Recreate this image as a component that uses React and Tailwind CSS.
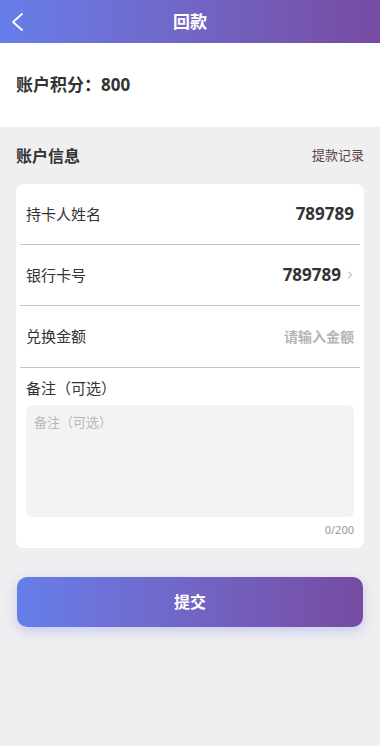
import React, { useState } from "react";
import { ChevronRight } from "lucide-react";

const font = { fontFamily: '"Noto Sans", "Noto Sans CJK SC", sans-serif' };

export default function App() {
  const [amount, setAmount] = useState("");
  const [remark, setRemark] = useState("");

  return (
    <div className="min-h-[746px] bg-[#efeef0] flex flex-col" style={font}>
      {/* 顶部导航 */}
      <div className="h-[43px] flex items-center relative bg-gradient-to-r from-[#667eea] to-[#764ba2]">
        <button className="absolute left-[10px] top-[12px] text-white">
          <svg width="14" height="20" viewBox="0 0 14 20" fill="none" stroke="currentColor" strokeWidth="1.8" strokeLinecap="round" strokeLinejoin="round">
            <polyline points="12,2 3,10 12,18" />
          </svg>
        </button>
        <div className="flex-1 text-center text-white text-[17px] font-bold">回款</div>
      </div>

      {/* 积分 */}
      <div className="bg-white h-[84px] flex items-center px-[16px]">
        <span className="text-[17px] font-bold text-[#333]">账户积分：800</span>
      </div>

      {/* 账户信息 */}
      <div className="flex items-center justify-between px-[16px] h-[57px]">
        <span className="text-[16px] font-bold text-[#333]">账户信息</span>
        <span className="text-[13px] text-[#5b4444]">提款记录</span>
      </div>

      <div className="mx-[16px] bg-white rounded-[8px] px-[4px]">
        <div className="h-[61px] flex items-center justify-between px-[6px] border-b border-[#c4c4c4]">
          <span className="text-[15px] text-[#333]">持卡人姓名</span>
          <span className="text-[17px] font-bold text-[#333]">789789</span>
        </div>
        <div className="h-[61px] flex items-center justify-between px-[6px] border-b border-[#c4c4c4]">
          <span className="text-[15px] text-[#333]">银行卡号</span>
          <span className="flex items-center gap-[3px]">
            <span className="text-[17px] font-bold text-[#333]">789789</span>
            <ChevronRight size={12} strokeWidth={2} className="text-[#999] -mr-[2px]" />
          </span>
        </div>
        <div className="h-[62px] flex items-center justify-between px-[6px] border-b border-[#c4c4c4]">
          <span className="text-[15px] text-[#333]">兑换金额</span>
          <input
            value={amount}
            onChange={(e) => setAmount(e.target.value)}
            placeholder="请输入金额"
            className="text-right text-[14px] font-bold text-[#333] placeholder:text-[#b5b5b5] outline-none w-[150px] bg-transparent"
            style={font}
          />
        </div>
        <div className="px-[6px] pt-[9px] pb-[10px]">
          <div className="text-[15px] text-[#333] leading-[22px]">备注（可选）</div>
          <textarea
            value={remark}
            onChange={(e) => setRemark(e.target.value)}
            placeholder="备注（可选）"
            maxLength={200}
            className="mt-[6px] w-full h-[112px] bg-[#f3f3f4] rounded-[6px] px-[8px] py-[8px] text-[13px] text-[#333] placeholder:text-[#b8b8b8] outline-none resize-none block"
            style={font}
          />
          <div className="text-right text-[11px] text-[#999] mt-[5px] leading-[16px]">{remark.length}/200</div>
        </div>
      </div>

      {/* 提交按钮 */}
      <div className="px-[17px] mt-[29px]">
        <button className="w-full h-[50px] rounded-[10px] bg-gradient-to-r from-[#667eea] to-[#764ba2] text-white text-[16px] font-bold shadow-[0_4px_12px_rgba(102,126,234,0.3)]">
          提交
        </button>
      </div>
    </div>
  );
}
